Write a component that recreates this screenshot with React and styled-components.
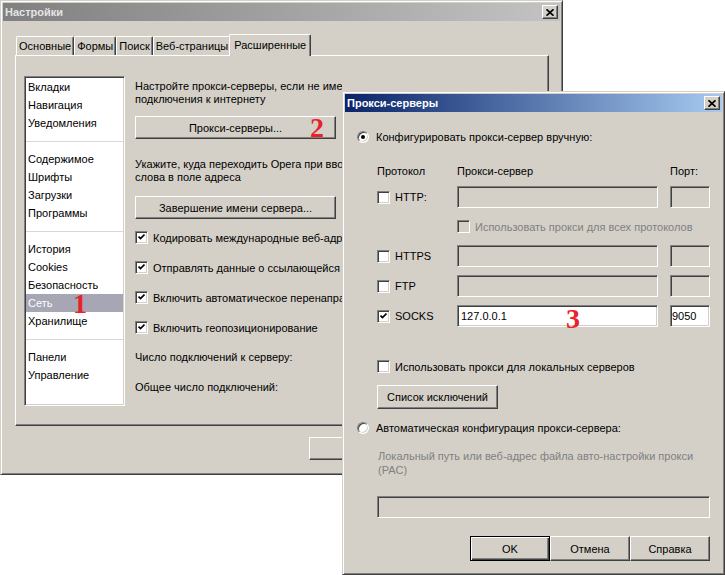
import React from 'react'
import styled, { createGlobalStyle, css } from 'styled-components'

const GlobalStyle = createGlobalStyle`
  html, body { margin: 0; padding: 0; background: #fff; }
  body {
    font-family: "Liberation Sans", Arial, sans-serif;
    font-size: 11px;
    color: #000;
  }
  * { box-sizing: border-box; }
`

const raised = css`
  border: 1px solid;
  border-color: #fff #404040 #404040 #fff;
  box-shadow: inset -1px -1px #808080;
`

const sunken = css`
  border: 1px solid;
  border-color: #808080 #fff #fff #808080;
  box-shadow: inset 1px 1px #404040, inset -1px -1px #d4d0c8;
`

const Desktop = styled.div`
  position: relative;
  width: 725px;
  height: 575px;
  overflow: hidden;
  background: #fff;
`

const Frame = styled.div`
  position: absolute;
  left: ${({ $x }) => $x}px;
  top: ${({ $y }) => $y}px;
  width: ${({ $w }) => $w}px;
  height: ${({ $h }) => $h}px;
  display: flex;
  flex-direction: column;
  padding: 2px;
  background: #d4d0c8;
  border: 1px solid;
  border-color: #d4d0c8 #404040 #404040 #d4d0c8;
  box-shadow: inset 1px 1px #fff, inset -1px -1px #808080;
`

const TitleBar = styled.div`
  flex: none;
  height: 18px;
  display: flex;
  align-items: center;
  justify-content: space-between;
  padding: 0 2px 0 2px;
  font-weight: bold;
  color: ${({ $active }) => ($active ? '#fff' : '#e4e4e4')};
  background: ${({ $active }) =>
    $active
      ? 'linear-gradient(to right, #0a246a, #a6caf0)'
      : 'linear-gradient(to right, #808080, #c3c3c3)'};
`

const CloseBtn = styled.div`
  width: 16px;
  height: 14px;
  display: flex;
  align-items: center;
  justify-content: center;
  background: #d4d0c8;
  ${raised}
`

const SettingsBody = styled.div`
  flex: 1;
  display: flex;
  flex-direction: column;
  padding: 13px 11px 0 12px;
`

const TabStrip = styled.div`
  position: relative;
  z-index: 1;
  height: 21px;
  display: flex;
  align-items: flex-end;
  padding-left: 1px;
`

const Tab = styled.div`
  height: ${({ $active }) => ($active ? 22 : 19)}px;
  margin: ${({ $active }) => ($active ? '0 -2px -1px -2px' : '0')};
  padding: ${({ $active }) => ($active ? '3px 4px 0' : '2px 2px 0')};
  line-height: 14px;
  white-space: nowrap;
  background: #d4d0c8;
  border-top: 1px solid #fff;
  border-left: 1px solid #fff;
  border-right: 1px solid #404040;
  border-radius: 2px 2px 0 0;
  box-shadow: inset -1px 0 #808080;
  position: relative;
  z-index: ${({ $active }) => ($active ? 2 : 1)};
`

const TabPanel = styled.div`
  height: 371px;
  display: flex;
  padding: 20px 0 0 8px;
  overflow: hidden;
  ${raised}
`

const NavList = styled.div`
  flex: none;
  width: 101px;
  height: 330px;
  padding: 1px;
  background: #fff;
  ${sunken}
`

const NavItem = styled.div`
  position: relative;
  height: 18px;
  line-height: 19px;
  padding-left: 2px;
  white-space: nowrap;
  background: ${({ $selected }) => ($selected ? '#a6a6b4' : 'transparent')};
  color: ${({ $selected }) => ($selected ? '#fff' : '#000')};
`

const NavSep = styled.div`
  height: 18px;
  display: flex;
  align-items: center;
  &::after {
    content: '';
    flex: 1;
    height: 1px;
    background: #d8d8d8;
  }
`

const Marker = styled.span`
  position: absolute;
  left: ${({ $x }) => $x}px;
  top: ${({ $y }) => $y}px;
  font-family: "Liberation Serif", "Times New Roman", serif;
  font-weight: bold;
  font-size: 28px;
  line-height: 22px;
  height: 22px;
  color: #e8222a;
  pointer-events: none;
`

/* the proxy dialog covers everything right of x=342, so the column is cut there */
const ContentCol = styled.div`
  flex: none;
  width: 207px;
  display: flex;
  flex-direction: column;
  align-items: flex-start;
  margin-left: 10px;
  overflow: hidden;
  white-space: nowrap;
`

const Para = styled.div`
  line-height: ${({ $lh }) => $lh || 13}px;
  margin-top: ${({ $mt }) => $mt || 0}px;
  color: ${({ $muted }) => ($muted ? '#808080' : '#000')};
  margin-left: ${({ $ml }) => $ml || 0}px;
`

const Button = styled.div`
  position: relative;
  flex: none;
  width: ${({ $w }) => $w}px;
  height: ${({ $h }) => $h || 23}px;
  margin-top: ${({ $mt }) => $mt || 0}px;
  margin-left: ${({ $ml }) => $ml || 0}px;
  display: flex;
  align-items: center;
  justify-content: center;
  background: #d4d0c8;
  white-space: nowrap;
  ${({ $default }) =>
    $default
      ? css`
          border: 1px solid #000;
          box-shadow: inset 1px 1px #fff, inset -1px -1px #404040, inset -2px -2px #808080;
        `
      : raised}
`

const CheckRow = styled.div`
  display: flex;
  align-items: center;
  gap: 5px;
  height: 13px;
  margin-top: ${({ $mt }) => $mt || 0}px;
  margin-left: ${({ $ml }) => $ml || 0}px;
  color: ${({ $disabled }) => ($disabled ? '#808080' : '#000')};
  white-space: nowrap;
`

const Box = styled.div`
  flex: none;
  width: 13px;
  height: 13px;
  display: flex;
  align-items: center;
  justify-content: center;
  background: ${({ $disabled }) => ($disabled ? '#d4d0c8' : '#fff')};
  ${sunken}
`

const RadioDot = styled.div`
  flex: none;
  position: relative;
  width: 12px;
  height: 12px;
  border-radius: 50%;
  background: #fff;
  border: 1px solid;
  border-color: #808080 #fff #fff #808080;
  box-shadow: inset 1px 1px #404040, inset -1px -1px #d4d0c8;
  &::after {
    content: '';
    display: ${({ $on }) => ($on ? 'block' : 'none')};
    position: absolute;
    left: 3px;
    top: 3px;
    width: 4px;
    height: 4px;
    border-radius: 50%;
    background: #000;
  }
`

const RadioRow = styled.div`
  display: flex;
  align-items: center;
  gap: 7px;
  height: 13px;
  margin-top: ${({ $mt }) => $mt || 0}px;
  white-space: nowrap;
`

const DialogBody = styled.div`
  flex: 1;
  display: flex;
  flex-direction: column;
  align-items: flex-start;
  padding-left: 12px;
`

const ProxyRow = styled.div`
  display: grid;
  grid-template-columns: 80px 201px 12px 40px;
  align-items: center;
  margin-left: 20px;
  margin-top: ${({ $mt }) => $mt || 0}px;
  min-height: 13px;
  white-space: nowrap;
`

const Field = styled.div`
  height: 22px;
  width: ${({ $w }) => ($w ? `${$w}px` : 'auto')};
  margin-left: ${({ $ml }) => $ml || 0}px;
  margin-top: ${({ $mt }) => $mt || 0}px;
  padding-left: ${({ $pl }) => ($pl !== undefined ? $pl : 3)}px;
  line-height: 20px;
  background: ${({ $disabled }) => ($disabled ? '#d4d0c8' : '#fff')};
  position: relative;
  ${sunken}
`

const ButtonBar = styled.div`
  align-self: stretch;
  display: flex;
  justify-content: flex-end;
  gap: ${({ $gap }) => $gap || 0}px;
  margin-top: ${({ $mt }) => $mt || 0}px;
  padding-right: ${({ $pr }) => $pr || 0}px;
`

const Check = () => (
  <svg width="7" height="7" viewBox="0 0 7 7">
    <path d="M0.5 2.5 L2.5 4.6 L6.5 0.6" fill="none" stroke="#000" strokeWidth="1.7" />
  </svg>
)

const CloseGlyph = () => (
  <svg width="8" height="7" viewBox="0 0 8 7">
    <path d="M0.5 0.3 L7.5 6.7 M7.5 0.3 L0.5 6.7" stroke="#000" strokeWidth="1.7" />
  </svg>
)

const Checkbox = ({ checked, disabled }) => (
  <Box $disabled={disabled}>{checked && <Check />}</Box>
)

const navGroups = [
  ['Вкладки', 'Навигация', 'Уведомления'],
  ['Содержимое', 'Шрифты', 'Загрузки', 'Программы'],
  ['История', 'Cookies', 'Безопасность', 'Сеть', 'Хранилище'],
  ['Панели', 'Управление'],
]

const tabs = ['Основные', 'Формы', 'Поиск', 'Веб-страницы', 'Расширенные']

const options = [
  'Кодировать международные веб-адреса',
  'Отправлять данные о ссылающейся странице',
  'Включить автоматическое перенаправление',
  'Включить геопозиционирование',
]

const SettingsWindow = () => (
  <Frame $x={0} $y={0} $w={563} $h={475}>
    <TitleBar>
      <span>Настройки</span>
      <CloseBtn><CloseGlyph /></CloseBtn>
    </TitleBar>
    <SettingsBody>
      <TabStrip>
        {tabs.map((t) => (
          <Tab key={t} $active={t === 'Расширенные'}>{t}</Tab>
        ))}
      </TabStrip>
      <TabPanel>
        <NavList>
          {navGroups.map((group, gi) => (
            <React.Fragment key={gi}>
              {gi > 0 && <NavSep />}
              {group.map((item) => (
                <NavItem key={item} $selected={item === 'Сеть'}>
                  {item}
                  {item === 'Сеть' && <Marker $x={47} $y={-1}>1</Marker>}
                </NavItem>
              ))}
            </React.Fragment>
          ))}
        </NavList>
        <ContentCol>
          <Para $mt={4}>
            Настройте прокси-серверы, если не имеете прямого<br />
            подключения к интернету
          </Para>
          <Button $w={201} $mt={10}>
            Прокси-серверы...
            <Marker $x={174} $y={0}>2</Marker>
          </Button>
          <Para $mt={19}>
            Укажите, куда переходить Opera при вводе<br />
            слова в поле адреса
          </Para>
          <Button $w={201} $mt={12}>Завершение имени сервера...</Button>
          {options.map((o, i) => (
            <CheckRow key={o} $mt={i === 0 ? 12 : 17}>
              <Checkbox checked />
              {o}
            </CheckRow>
          ))}
          <Para $mt={17}>Число подключений к серверу:</Para>
          <Para $mt={17}>Общее число подключений:</Para>
        </ContentCol>
      </TabPanel>
      {/* OK / Cancel / Help of the settings window, hidden under the dialog */}
      <ButtonBar $mt={11} $gap={6}>
        <Button $w={76} />
        <Button $w={76} />
        <Button $w={76} />
      </ButtonBar>
    </SettingsBody>
  </Frame>
)

const proxies = [
  { name: 'HTTP:', mt: 9 },
  { name: 'HTTPS', mt: 12 },
  { name: 'FTP', mt: 8 },
  { name: 'SOCKS', mt: 8, on: true, host: '127.0.0.1', port: '9050' },
]

const ProxyDialog = () => (
  <Frame $x={342} $y={91} $w={383} $h={484}>
    <TitleBar $active>
      <span>Прокси-серверы</span>
      <CloseBtn><CloseGlyph /></CloseBtn>
    </TitleBar>
    <DialogBody>
      <RadioRow $mt={18}>
        <RadioDot $on />
        Конфигурировать прокси-сервер вручную:
      </RadioRow>

      <ProxyRow $mt={21}>
        <span>Протокол</span>
        <span>Прокси-сервер</span>
        <span />
        <span>Порт:</span>
      </ProxyRow>

      {proxies.map((p) => (
        <React.Fragment key={p.name}>
          <ProxyRow $mt={p.mt}>
            <CheckRow>
              <Checkbox checked={p.on} />
              {p.name}
            </CheckRow>
            <Field $disabled={!p.on}>
              {p.host}
              {p.on && <Marker $x={108} $y={2}>3</Marker>}
            </Field>
            <span />
            <Field $disabled={!p.on} $pl={1}>{p.port}</Field>
          </ProxyRow>
          {p.name === 'HTTP:' && (
            <ProxyRow $mt={12}>
              <span />
              <CheckRow $disabled>
                <Checkbox disabled />
                Использовать прокси для всех протоколов
              </CheckRow>
            </ProxyRow>
          )}
        </React.Fragment>
      ))}

      <CheckRow $mt={33} $ml={20}>
        <Checkbox />
        Использовать прокси для локальных серверов
      </CheckRow>
      <Button $w={121} $h={24} $mt={12} $ml={20}>Список исключений</Button>

      <RadioRow $mt={12}>
        <RadioDot />
        Автоматическая конфигурация прокси-сервера:
      </RadioRow>
      <Para $mt={15} $ml={21} $lh={14} $muted>
        Локальный путь или веб-адрес файла авто-настройки прокси<br />
        (PAC)
      </Para>
      <Field $w={333} $mt={19} $ml={20} $disabled />

      <ButtonBar $mt={18} $pr={12}>
        <Button $w={80} $h={25} $default>OK</Button>
        <Button $w={80} $h={25}>Отмена</Button>
        <Button $w={80} $h={25}>Справка</Button>
      </ButtonBar>
    </DialogBody>
  </Frame>
)

export default function App() {
  return (
    <>
      <GlobalStyle />
      <Desktop>
        <SettingsWindow />
        <ProxyDialog />
      </Desktop>
    </>
  )
}
